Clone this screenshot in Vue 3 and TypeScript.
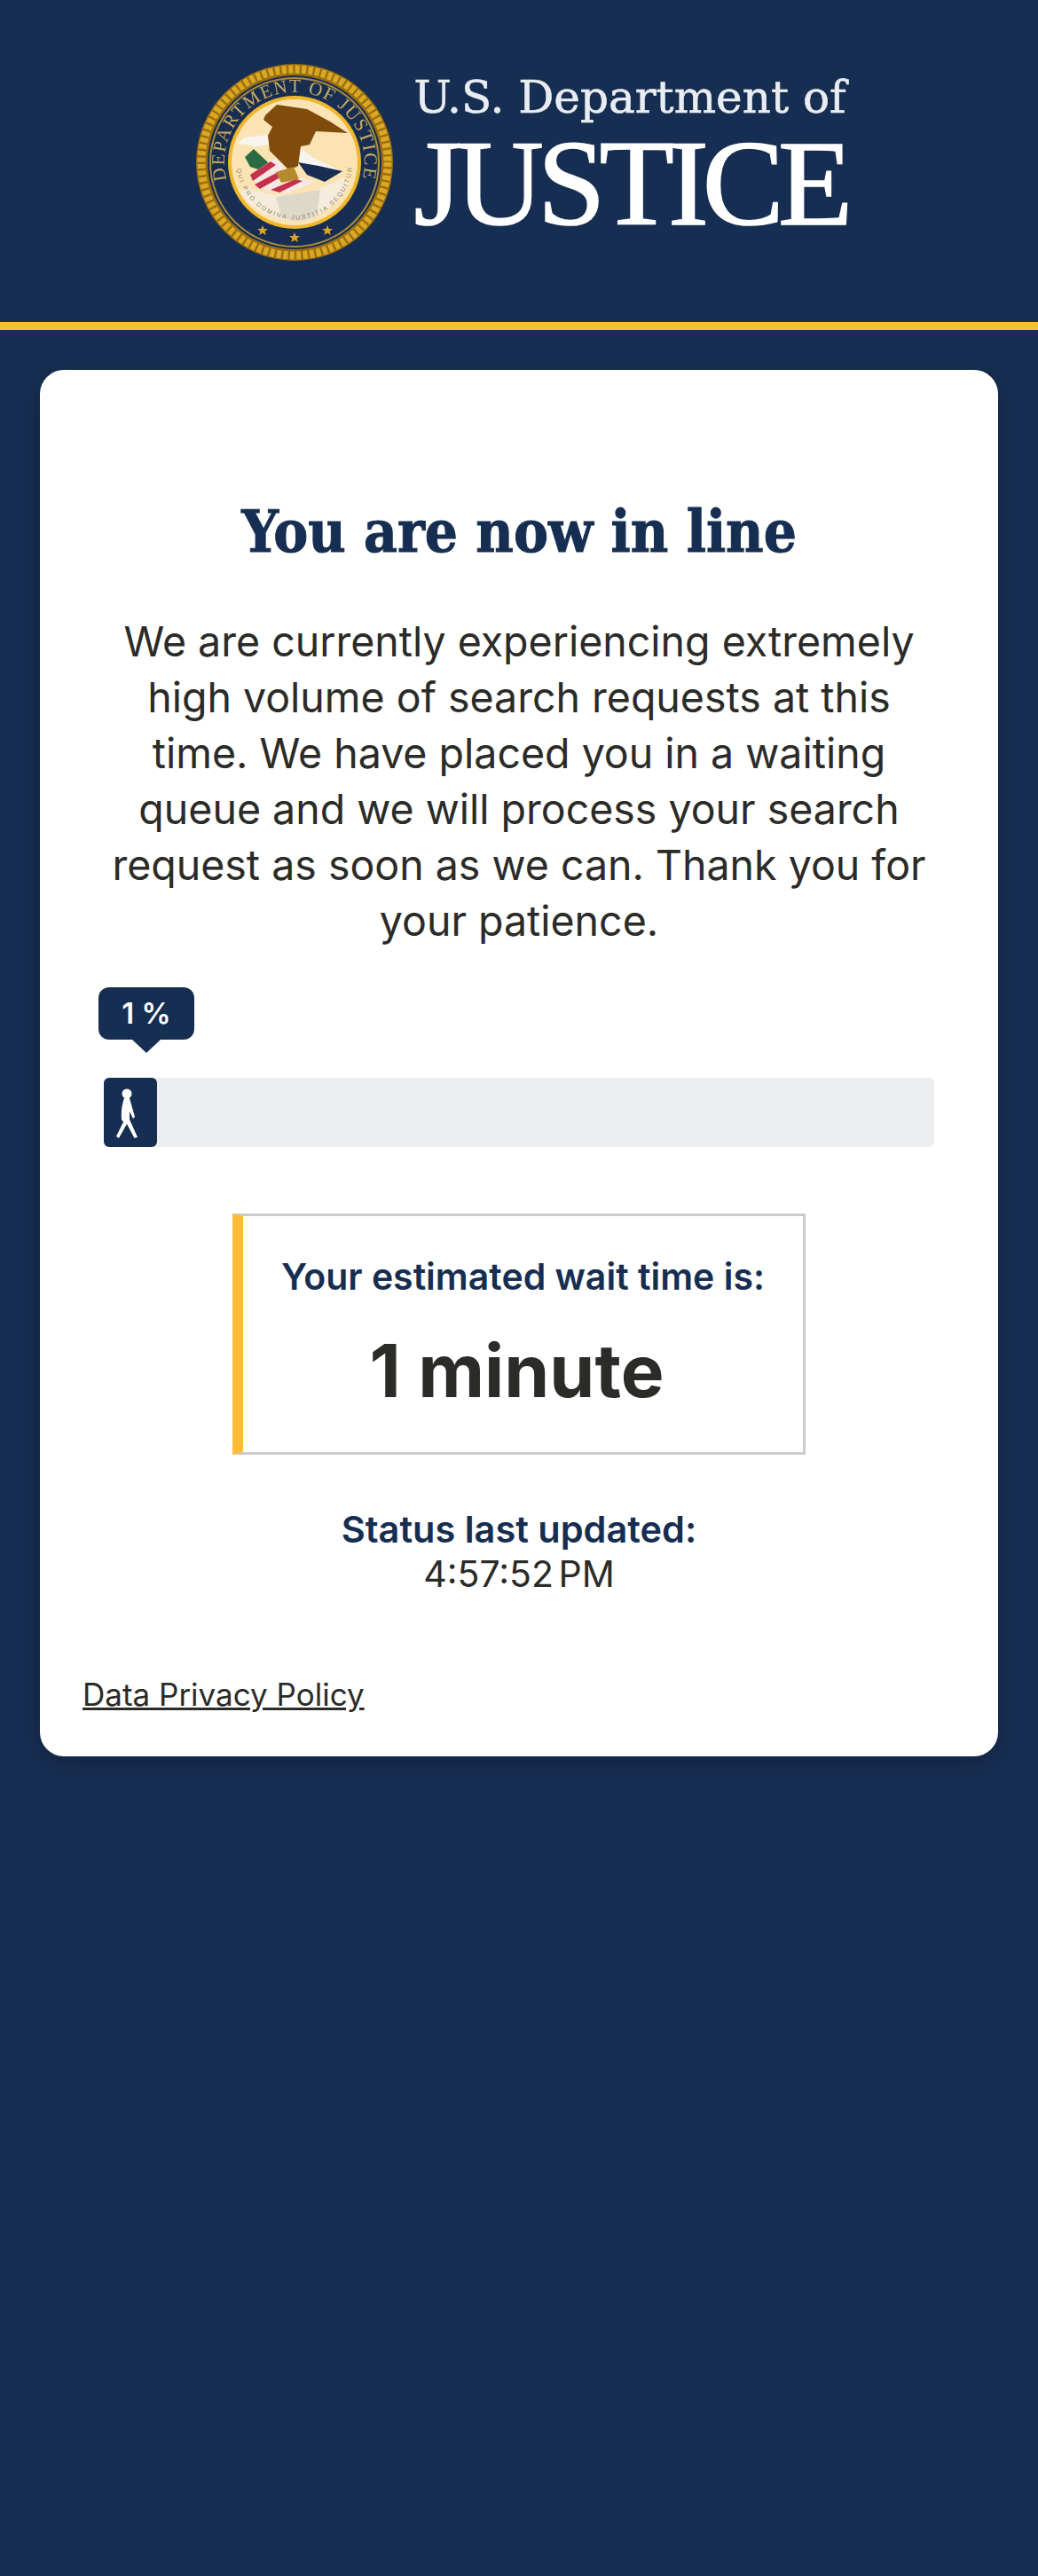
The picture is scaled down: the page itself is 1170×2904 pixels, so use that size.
<script setup lang="ts">
const percent = 1
const walkerWidth = 60
const stars = [
  { x: 75, y: 188 },
  { x: 111, y: 196 },
  { x: 148, y: 188 },
]
</script>

<template>
  <div class="page">
    <header class="header">
      <div class="logo">
        <svg class="seal" viewBox="0 0 222 222" role="img" aria-label="Department of Justice seal">
          <defs>
            <path id="sealArc" d="M34.600 131 A79 79 0 1 1 187.400 131" />
            <path id="mottoArc" d="M46 118 A65.500 65.500 0 0 0 176 118" />
          </defs>
          <circle cx="111" cy="111" r="111" fill="#9c6f10" />
          <circle cx="111" cy="111" r="105" fill="none" stroke="#dba823" stroke-width="9" stroke-dasharray="5 2.500" />
          <circle cx="111" cy="111" r="98" fill="#182d52" />
          <circle cx="111" cy="111" r="95" fill="none" stroke="#a98c3e" stroke-width="2" />
          <text class="seal-text"><textPath href="#sealArc" textLength="286" lengthAdjust="spacing">DEPARTMENT OF JUSTICE</textPath></text>
          <circle cx="111" cy="111" r="75" fill="#efb72c" />
          <circle cx="111" cy="111" r="71" fill="#fbe3b4" />
          <path d="M56 140 Q111 160 166 128 L172 135 A70 70 0 0 1 50 145 Z" fill="#f5ecdc" />
          <path d="M90 150 L140 142 L136 172 Q112 182 96 172 Z" fill="#ded8c8" />
          <text class="motto"><textPath href="#mottoArc" textLength="190" lengthAdjust="spacing">QUI PRO DOMINA JUSTITIA SEQUITUR</textPath></text>
          <path d="M46 90 L55 83 L80 80 L83 91 L68 93 L55 91 Z" fill="#f7f5ef" />
          <path d="M55 105 L65 96 L81 111 L76 121 L61 116 Z" fill="#2b6b43" />
          <path d="M61 125 L91 105 L105 125 L136 133 L101 146 L71 140 Z" fill="#f7e8e4" />
          <path d="M61 125 L84 110 L90 114 L64 132 Z M66 136 L96 120 L100 125 L72 141 Z M84 142 L112 130 L120 132 L94 145 Z" fill="#c6304a" />
          <path d="M118 95 L131 105 L163 121 L115 111 Z" fill="#f6f4ef" />
          <path d="M115 111 L138 115 L165 121 L145 133 L125 125 Z" fill="#182d52" />
          <path d="M78 58 L91 46 L125 51 L151 65 L171 78 L135 76 L128 91 L118 93 L115 115 L105 120 L83 98 L81 81 L86 71 L76 63 Z" fill="#7f4c0c" />
          <path d="M90 122 L110 116 L116 130 L96 134 Z" fill="#b48a2a" />
          <g fill="#d9a52f">
            <polygon
              v-for="star in stars"
              :key="star.x"
              points="0,-6 1.700,-2 6,-1.900 2.700,.8 3.700,5 0,2.600 -3.700,5 -2.700,.8 -6,-1.900 -1.700,-2"
              :transform="`translate(${star.x} ${star.y})`"
            />
          </g>
        </svg>
        <div class="wordmark">
          <span class="wordmark-top">U.S. Department of</span>
          <span class="wordmark-main">JUSTICE</span>
        </div>
      </div>
    </header>

    <main class="card">
      <h1 class="title">You are now in line</h1>
      <p class="intro">
        We are currently experiencing extremely high volume of search requests at this time. We have placed you in a
        waiting queue and we will process your search request as soon as we can. Thank you for your patience.
      </p>

      <div class="progress">
        <div class="tip">{{ percent }} %</div>
        <div class="track">
          <div class="fill" :style="{ width: `${walkerWidth}px` }">
            <svg class="walker" viewBox="0 0 60 78">
              <circle cx="26" cy="18" r="5.500" fill="#fff" />
              <path d="M23 23 L29 23 L35 44 L33 46 L29 38 L29 47 L38 67 L34.500 68 L26 52 L17 68 L14 66 L22 50 L20 47 Q19 34 23 23 Z" fill="#fff" />
            </svg>
          </div>
        </div>
      </div>

      <div class="wait">
        <div class="wait-label">Your estimated wait time is:</div>
        <div class="wait-value">1 minute</div>
      </div>

      <div class="status">
        <div class="status-label">Status last updated:</div>
        <div class="status-time">4:57:52 PM</div>
      </div>

      <a class="privacy" href="#">Data Privacy Policy</a>
    </main>
  </div>
</template>

<style scoped>
.page {
  min-height: 2904px;
  background: #162e51;
  font-family: Inter, "Liberation Sans", sans-serif;
  color: #2b2b28;
  padding-bottom: 1px;
  box-sizing: border-box;
}

.header {
  height: 363px;
  border-bottom: 9px solid #ffbc36;
  display: flex;
  justify-content: center;
}

.logo {
  display: flex;
  gap: 24px;
  padding-top: 72px;
  padding-left: 9px;
}

.seal {
  width: 222px;
  height: 222px;
  flex: none;
  filter: blur(0.5px);
}

.seal-text {
  font-family: "Liberation Serif", serif;
  font-size: 21px;
  fill: #c9ad5e;
}

.motto {
  font-family: "Liberation Sans", sans-serif;
  font-size: 7px;
  fill: #8f8468;
}

.wordmark {
  display: flex;
  flex-direction: column;
  width: 492px;
  color: #fff;
  white-space: nowrap;
}

.wordmark-top {
  font-family: "DejaVu Serif", serif;
  font-size: 50px;
  line-height: 56px;
  margin-top: 10px;
  color: #e9edf2;
  -webkit-text-stroke: 0.6px #e9edf2;
}

.wordmark-main {
  font-family: "Liberation Serif", serif;
  font-size: 138px;
  line-height: 124px;
  margin-top: 7px;
  letter-spacing: -7px;
  -webkit-text-stroke: 1.5px #fff;
}

.card {
  margin: 45px 45px 0;
  height: 1563px;
  box-sizing: border-box;
  background: #fff;
  border-radius: 27px;
  box-shadow: 0 8px 24px rgba(0, 0, 0, 0.2);
  padding: 147px 48px 0;
  display: flex;
  flex-direction: column;
  align-items: center;
}

.title {
  margin: 0;
  font-family: "DejaVu Serif Condensed", "DejaVu Serif", serif;
  font-size: 65px;
  line-height: 70px;
  font-weight: 700;
  color: #162e51;
  text-align: center;
  -webkit-text-stroke: 1px #162e51;
}

.intro {
  margin: 58px 0 0;
  max-width: 930px;
  font-size: 46.500px;
  line-height: 63px;
  text-align: center;
}

.progress {
  align-self: stretch;
  margin-top: 43px;
  padding: 0 24px;
}

.tip {
  position: relative;
  width: 108px;
  height: 59px;
  margin-left: -6px;
  background: #162e51;
  color: #fff;
  border-radius: 12px;
  font-size: 33px;
  font-weight: 600;
  line-height: 59px;
  text-align: center;
}

.tip::after {
  content: "";
  position: absolute;
  left: 38px;
  top: 59px;
  border-left: 16px solid transparent;
  border-right: 16px solid transparent;
  border-top: 15px solid #162e51;
}

.track {
  margin-top: 43px;
  height: 78px;
  background: #eceef0;
  border-radius: 6px;
}

.fill {
  height: 100%;
  background: #162e51;
  border-radius: 6px;
}

.walker {
  display: block;
  width: 60px;
  height: 78px;
}

.wait {
  margin-top: 75px;
  width: 646px;
  height: 272px;
  box-sizing: border-box;
  border: 3px solid #ccc;
  border-left: 12px solid #ffbc36;
  text-align: center;
}

.wait-label {
  margin-top: 44px;
  font-size: 41px;
  line-height: 48px;
  font-weight: 600;
  color: #162e51;
}

.wait-value {
  margin-top: 33px;
  padding-right: 14px;
  font-size: 82px;
  line-height: 100px;
  font-weight: 700;
}

.status {
  margin-top: 59px;
  text-align: center;
  font-size: 41px;
  line-height: 50px;
}

.status-label {
  font-size: 41.500px;
  font-weight: 600;
  color: #162e51;
}

.status-time {
  word-spacing: -6px;
}

.privacy {
  align-self: flex-start;
  margin-top: 89px;
  font-size: 35px;
  line-height: 44px;
  color: #2b2b28;
}
</style>

<style>
html,
body {
  margin: 0;
  background: #162e51;
}
</style>
